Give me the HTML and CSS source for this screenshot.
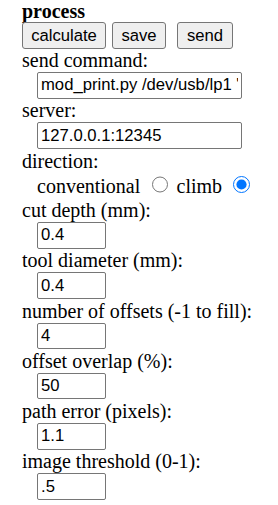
FILE: index.html
```html
<!DOCTYPE html>
<html lang="en">
<head>
  <meta charset="UTF-8">
  <title>process</title>
  <link rel="stylesheet" href="styles.css">
</head>
<body>
  <div class="panel">
    <div class="title">process</div>

    <div class="buttons">
      <button class="calc">calculate</button>
      <button class="save">save</button>
      <button class="send">send</button>
    </div>

    <div class="label">send command:</div>
    <div class="field"><input class="wide" type="text" value="mod_print.py /dev/usb/lp1 '"></div>

    <div class="label">server:</div>
    <div class="field"><input class="wide" type="text" value="127.0.0.1:12345"></div>

    <div class="label">direction:</div>
    <div class="radios">
      conventional <input type="radio" name="direction"> climb <input type="radio" name="direction" checked>
    </div>

    <div class="label">cut depth (mm):</div>
    <div class="field"><input class="small" type="text" value="0.4"></div>

    <div class="label">tool diameter (mm):</div>
    <div class="field"><input class="small" type="text" value="0.4"></div>

    <div class="label">number of offsets (-1 to fill):</div>
    <div class="field"><input class="small" type="text" value="4"></div>

    <div class="label">offset overlap (%):</div>
    <div class="field"><input class="small" type="text" value="50"></div>

    <div class="label">path error (pixels):</div>
    <div class="field"><input class="small" type="text" value="1.1"></div>

    <div class="label">image threshold (0-1):</div>
    <div class="field"><input class="small" type="text" value=".5"></div>
  </div>
</body>
</html>
```

FILE: styles.css
```css
body {
  margin: 0;
  padding: 0;
  background-color: #fff;
  color: #000;
  font-family: 'Liberation Serif', 'Times New Roman', serif;
  font-size: 20px;
}

.panel {
  padding-left: 22px;
}

.title {
  font-weight: bold;
  line-height: 22px;
}

.buttons {
  display: flex;
  height: 27px;
}

.buttons button {
  box-sizing: border-box;
  height: 27px;
  padding: 0;
  font-family: 'Liberation Sans', Arial, sans-serif;
  font-size: 16.67px;
  color: #000;
  background-color: #efefef;
  border: 1px solid #767676;
  border-radius: 3px;
}

.buttons .calc {
  width: 84px;
}

.buttons .save {
  width: 54px;
  margin-left: 6px;
}

.buttons .send {
  width: 56px;
  margin-left: 11px;
}

.label {
  line-height: 23px;
  white-space: nowrap;
}

.field {
  height: 27.3px;
  padding-left: 15px;
}

.field input {
  display: block;
  box-sizing: border-box;
  height: 26.5px;
  margin: 0;
  padding: 1px 3px;
  font-family: 'Liberation Sans', Arial, sans-serif;
  font-size: 16.67px;
  color: #000;
  background-color: #fff;
  border: 1px solid #767676;
  border-radius: 2px;
}

.field .wide {
  width: 205px;
}

.field .small {
  width: 69px;
}

.radios {
  padding-left: 15px;
  line-height: 26.4px;
  white-space: nowrap;
}

.radios input {
  width: 16.25px;
  height: 16.25px;
  margin: 3.75px 3.75px 0 6.25px;
  vertical-align: baseline;
}
```
